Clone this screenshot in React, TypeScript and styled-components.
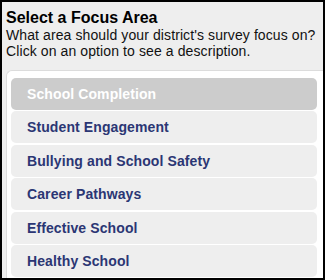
import React, { useState } from "react";
import styled, { createGlobalStyle } from "styled-components";

const areas = [
  "School Completion",
  "Student Engagement",
  "Bullying and School Safety",
  "Career Pathways",
  "Effective School",
  "Healthy School",
];

const App = () => {
  const [selected, setSelected] = useState(0);

  return (
    <>
      <GlobalStyle />
      <Frame>
        <Title>Select a Focus Area</Title>
        <Intro>
          What area should your district's survey focus on?
          <br />
          Click on an option to see a description.
        </Intro>
        <OptionPanel>
          {areas.map((area, i) => (
            <Option
              key={area}
              $active={i === selected}
              onClick={() => setSelected(i)}
            >
              {area}
            </Option>
          ))}
        </OptionPanel>
      </Frame>
    </>
  );
};

export default App;

const GlobalStyle = createGlobalStyle`
  body {
    margin: 0;
    font-family: "Liberation Sans", Arial, sans-serif;
  }
`;

const Frame = styled.div`
  box-sizing: border-box;
  width: 325px;
  height: 280px;
  border: 2px solid #000;
  background: #eeeeee;
  padding: 7px 0 0 4px;
  overflow: hidden;
  display: flex;
  flex-direction: column;
`;

const Title = styled.h2`
  margin: 0;
  font-size: 16px;
  line-height: 18px;
  font-weight: bold;
  color: #000;
`;

const Intro = styled.p`
  margin: 0;
  font-size: 14px;
  line-height: 16px;
  letter-spacing: 0.1px;
  color: #111;
`;

const OptionPanel = styled.div`
  margin: 11px 0 0 0;
  flex: 1;
  background: #fff;
  border: 1px solid #dcdcdc;
  border-right: none;
  border-bottom: none;
  border-top-left-radius: 6px;
  padding: 7px 6px 0 4px;
  display: flex;
  flex-direction: column;
  gap: 1.4px;
`;

const Option = styled.div<{ $active: boolean }>`
  flex: none;
  height: 32px;
  display: flex;
  align-items: center;
  padding-left: 16px;
  border-radius: 5px;
  background: ${(p) => (p.$active ? "#cccccc" : "#eeeeee")};
  color: ${(p) => (p.$active ? "#ffffff" : "#2b3674")};
  font-size: 14px;
  font-weight: bold;
  letter-spacing: 0.1px;
  cursor: pointer;
`;
